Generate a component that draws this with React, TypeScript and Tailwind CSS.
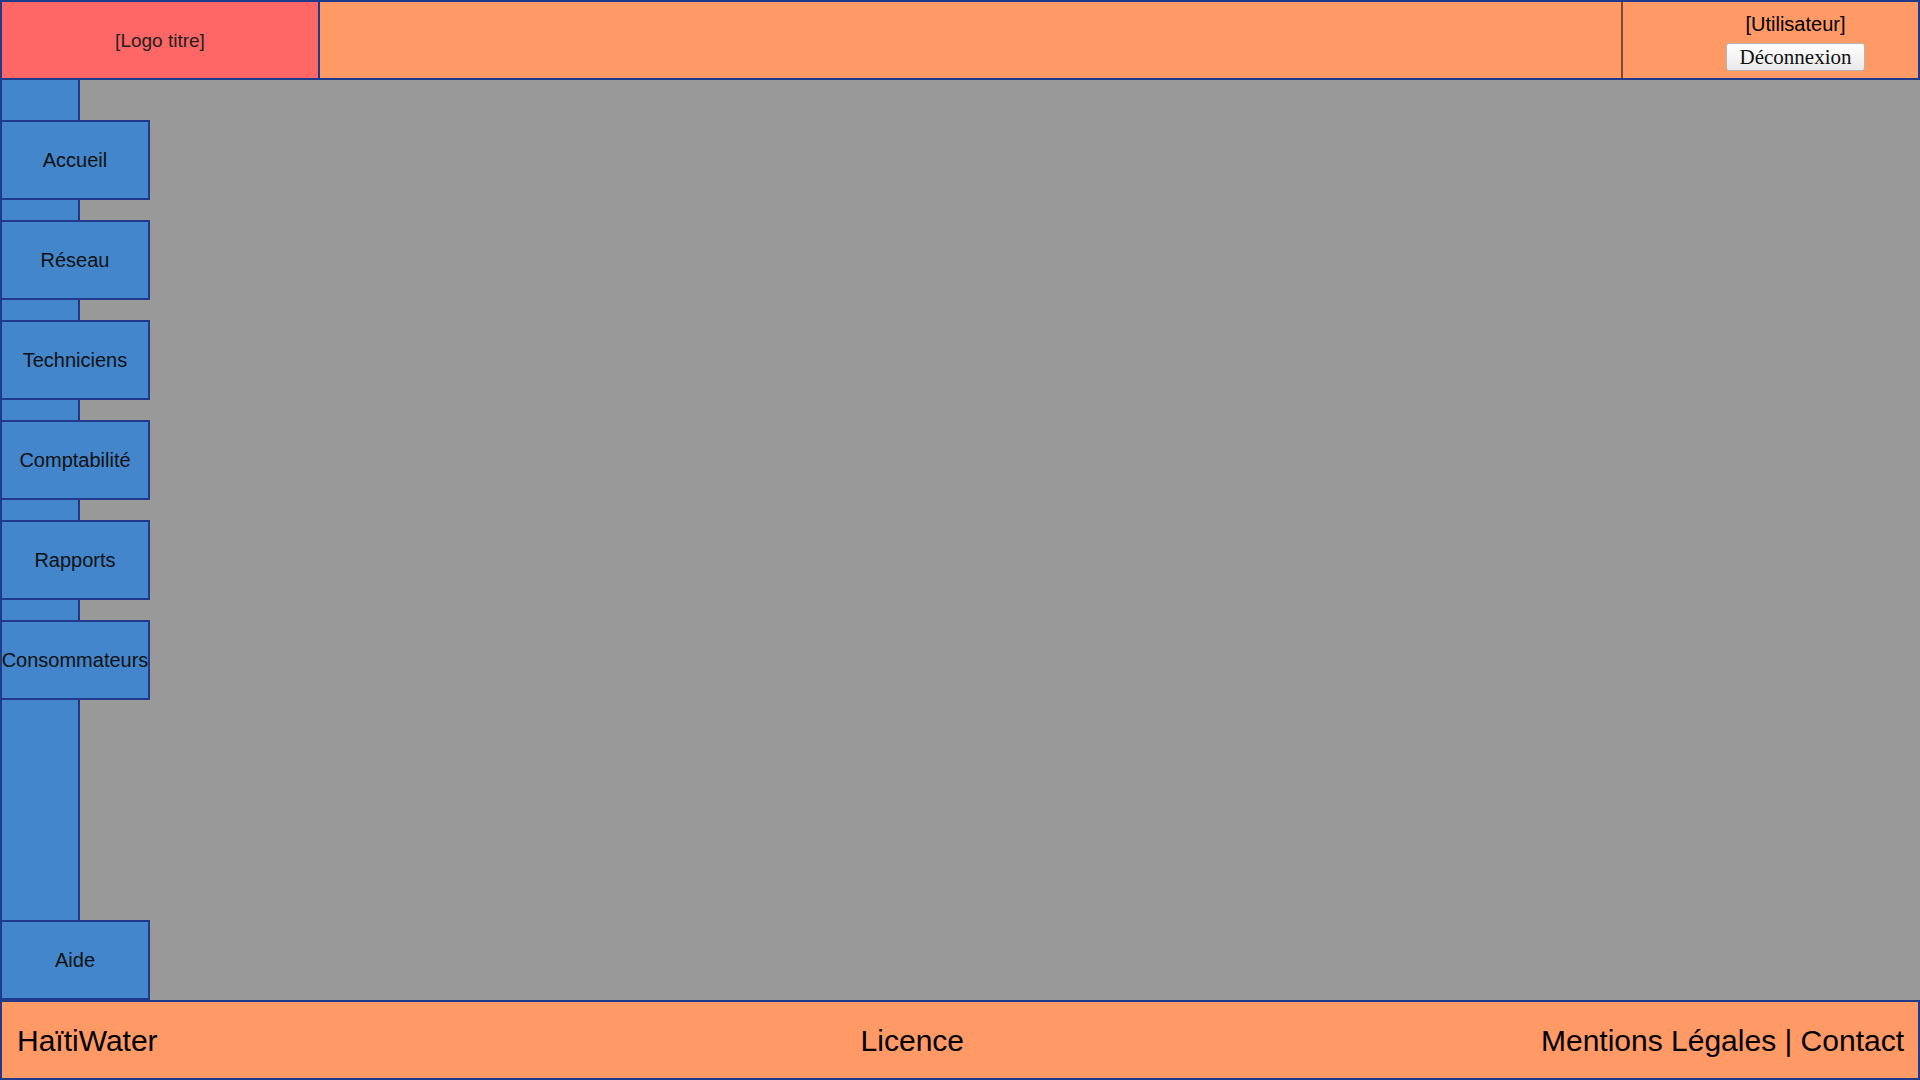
import React from "react";

const navItems = ["Accueil", "Réseau", "Techniciens", "Comptabilité", "Rapports", "Consommateurs"];

function NavButton({ label }: { label: string }) {
  return (
    <div className="w-[150px] h-[80px] shrink-0 bg-[#4386cb] border-2 border-[#1f3a8a] flex items-center justify-center whitespace-nowrap text-[20px] text-[#111]">
      {label}
    </div>
  );
}

export default function App() {
  return (
    <div className="w-[1920px] h-[1080px] flex flex-col overflow-hidden font-['Liberation_Sans',Arial,sans-serif] text-black">
      {/* Header */}
      <header className="h-[80px] shrink-0 flex border-2 border-[#1f3a8a] bg-[#ff9966]">
        <div className="w-[318px] bg-[#ff6666] border-r-2 border-[#1f3a8a] flex items-center justify-center text-[19px] text-[#222] pt-[3px]">
          [Logo titre]
        </div>
        <div className="flex-1" />
        <div className="w-[297px] border-l-2 border-[#7a4a33] flex flex-col items-center pl-[50px] pt-[10px]">
          <div className="text-[20px] leading-[24px] text-black">[Utilisateur]</div>
          <button className="mt-[7px] h-[28px] px-[13px] rounded-[3px] border border-[#b5b5b5] bg-gradient-to-b from-[#ffffff] to-[#e9e9e9] font-['Liberation_Serif','Times_New_Roman',serif] text-[21px] leading-[24px] text-[#111]">
            Déconnexion
          </button>
        </div>
      </header>

      {/* Middle */}
      <div className="flex-1 flex bg-[#999999] min-h-0">
        <nav className="w-[80px] shrink-0 bg-[#4386cb] border-l-2 border-r-2 border-[#1f3a8a] flex flex-col pt-[40px] gap-[20px]">
          {navItems.map((n) => (
            <div key={n} className="-ml-[2px]">
              <NavButton label={n} />
            </div>
          ))}
          <div className="-ml-[2px] mt-auto">
            <NavButton label="Aide" />
          </div>
        </nav>
        <main className="flex-1" />
      </div>

      {/* Footer */}
      <footer className="h-[80px] shrink-0 flex items-center border-2 border-[#1f3a8a] bg-[#ff9966] pl-[15px] pr-[14px] pt-[2px] text-[30px] leading-none text-black">
        <div>HaïtiWater</div>
        <div className="ml-[703px]">Licence</div>
        <div className="ml-auto">Mentions Légales | Contact</div>
      </footer>
    </div>
  );
}
